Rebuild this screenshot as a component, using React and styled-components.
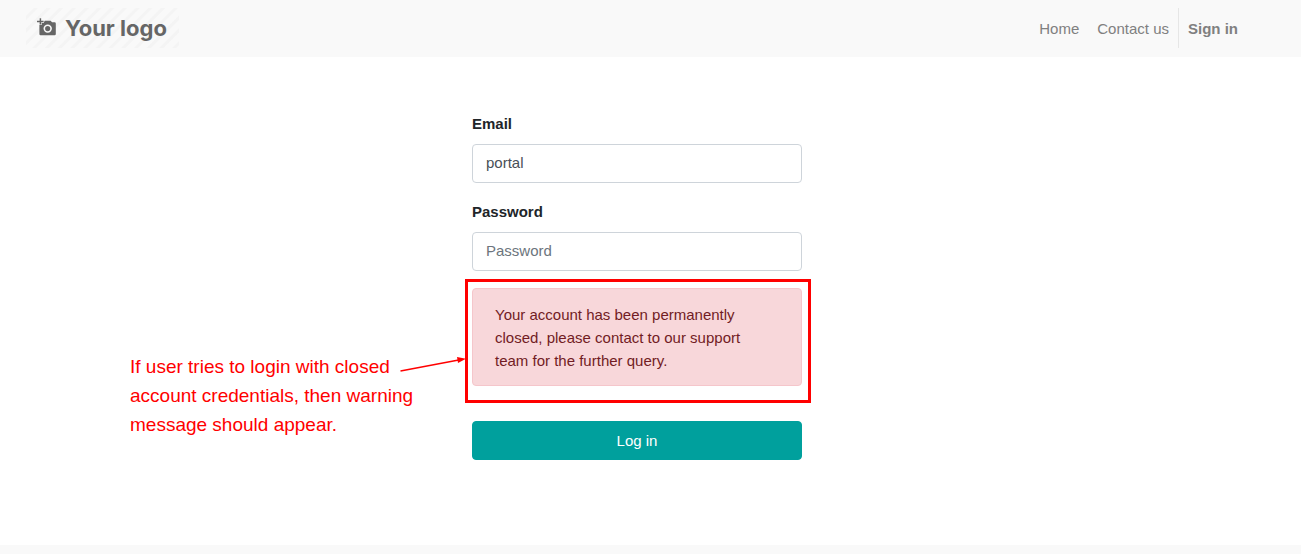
import React, { useState } from 'react'
import styled, { createGlobalStyle } from 'styled-components'

const App = () => {
    const [email, setEmail] = useState('portal')
    const [password, setPassword] = useState('')

    return (
        <Page>
            <GlobalStyle />
            <Header>
                <Logo href="#">
                    <CameraIcon />
                    <LogoText>Your logo</LogoText>
                </Logo>
                <Nav>
                    <NavLink href="#">Home</NavLink>
                    <NavLink href="#">Contact us</NavLink>
                    <SignInLink href="#">Sign in</SignInLink>
                </Nav>
            </Header>
            <Main>
                <LoginForm onSubmit={(e) => e.preventDefault()}>
                    <Field>
                        <Label htmlFor="login">Email</Label>
                        <Input
                            id="login"
                            type="text"
                            value={email}
                            onChange={(e) => setEmail(e.target.value)}
                        />
                    </Field>
                    <Field>
                        <Label htmlFor="password">Password</Label>
                        <Input
                            id="password"
                            type="password"
                            placeholder="Password"
                            value={password}
                            onChange={(e) => setPassword(e.target.value)}
                        />
                    </Field>
                    <AlertArea>
                        <Alert role="alert">
                            Your account has been permanently closed, please contact to our support team for the further query.
                        </Alert>
                        <Highlight />
                        <Note>If user tries to login with closed account credentials, then warning message should appear.</Note>
                        <Arrow viewBox="0 0 66 16" aria-hidden="true">
                            <path d="M0.5 14 L60 2.8" stroke="#f00" strokeWidth="1.4" fill="none" />
                            <path d="M57 0 L66 1.8 L58 6 Z" fill="#f00" />
                        </Arrow>
                    </AlertArea>
                    <LoginButton type="submit">Log in</LoginButton>
                </LoginForm>
            </Main>
            <Footer />
        </Page>
    )
}

const CameraIcon = () => (
    <svg width="20" height="20" viewBox="0 0 20 20" aria-hidden="true">
        <path
            d="M7.8 2.7h5.8l1.5 1.6h2.5a1.2 1.2 0 0 1 1.2 1.2v10.5a1.2 1.2 0 0 1-1.2 1.2H3.6a1.2 1.2 0 0 1-1.2-1.2V5h4z"
            fill="#666"
        />
        <path d="M3.4 0v7M0 3.4h6.8" stroke="#f9f9f9" strokeWidth="2.6" fill="none" />
        <path d="M3.4 0.2v6.4M0 3.4h6.6" stroke="#666" strokeWidth="1.5" fill="none" />
        <circle cx="10.7" cy="10.6" r="3.4" fill="#666" stroke="#f9f9f9" strokeWidth="1.6" />
    </svg>
)

//styling
const GlobalStyle = createGlobalStyle`
    *, *::before, *::after{
        box-sizing: border-box;
    }
    body{
        margin: 0;
        background: white;
        color: #212529;
        font-family: "Liberation Sans", Arial, sans-serif;
        font-size: 15px;
        line-height: 23px;
    }
`;

const Page = styled.div`
    min-height: 100vh;
    display: flex;
    flex-direction: column;
    overflow-x: hidden;
`;

const Header = styled.header`
    display: flex;
    align-items: center;
    justify-content: space-between;
    padding: 8px 54px 9px 26px;
    background: #f9f9f9;
`;

const Logo = styled.a`
    display: flex;
    align-items: center;
    gap: 8px;
    height: 40px;
    padding: 0 12px 0 11px;
    color: #666;
    text-decoration: none;
    background: repeating-linear-gradient(135deg, #f9f9f9 0 5px, #f4f4f4 6px 8px, #f9f9f9 9px);
`;

const LogoText = styled.span`
    font-family: Inter, sans-serif;
    font-size: 22px;
    font-weight: 700;
    line-height: 40px;
`;

const Nav = styled.nav`
    display: flex;
    align-items: center;
`;

const NavLink = styled.a`
    padding: 9px 9px 7px;
    color: #808080;
    line-height: 24px;
    text-decoration: none;
`;

const SignInLink = styled(NavLink)`
    border-left: 1px solid #e6e6e6;
    font-weight: bold;
`;

const Main = styled.main`
    flex: 1;
    padding: 55px 27px 84px 0;
`;

const LoginForm = styled.form`
    width: 100%;
    max-width: 330px;
    margin: 0 auto;
`;

const Field = styled.div`
    margin-bottom: 17px;
`;

const Label = styled.label`
    display: block;
    margin-bottom: 9px;
    font-weight: bold;
`;

const Input = styled.input`
    display: block;
    width: 100%;
    height: 39px;
    padding: 0 13px 2px;
    border: 1px solid #ced4da;
    border-radius: 4px;
    background: white;
    color: #495057;
    font: inherit;
    &::placeholder{
        color: #6c757d;
        opacity: 1;
    }
`;

const AlertArea = styled.div`
    position: relative;
    margin-bottom: 35px;
`;

const Alert = styled.p`
    margin: 0;
    padding: 14px 44px 13px 22px;
    border: 1px solid #f5c6cb;
    border-radius: 4px;
    background: #f8d7da;
    color: #721c24;
`;

const Highlight = styled.div`
    position: absolute;
    top: -9px;
    right: -9px;
    bottom: -17px;
    left: -7px;
    border: 3px solid #f00;
    pointer-events: none;
`;

const Note = styled.p`
    position: absolute;
    top: 64px;
    right: 100%;
    width: 300px;
    margin: 0 42px 0 0;
    color: #f00;
    font-size: 19px;
    line-height: 29px;
`;

const Arrow = styled.svg`
    position: absolute;
    top: 69px;
    right: 100%;
    width: 66px;
    height: 16px;
    margin-right: 6px;
    overflow: visible;
`;

const LoginButton = styled.button`
    display: block;
    width: 100%;
    height: 39px;
    border: 1px solid #00a09d;
    border-radius: 4px;
    background: #00a09d;
    color: white;
    font: inherit;
    cursor: pointer;
`;

const Footer = styled.footer`
    height: 9px;
    background: #f9f9f9;
`;

export default App
